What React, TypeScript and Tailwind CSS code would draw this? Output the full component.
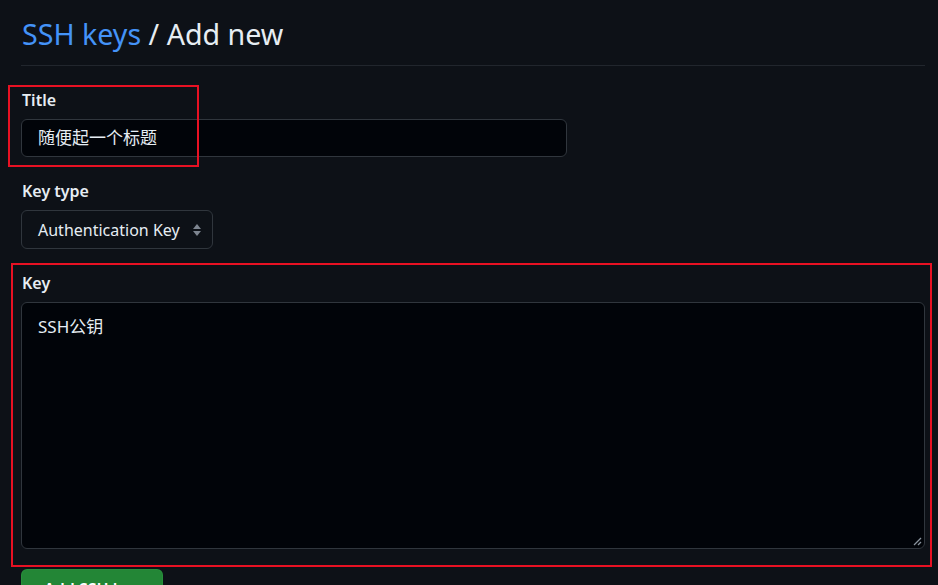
import React from "react";

const font = { fontFamily: '"Noto Sans", "Noto Sans CJK SC", sans-serif' };

export default function App() {
  return (
    <div className="relative w-[938px] h-[585px] overflow-hidden bg-[#0d1117] text-[#e6edf3]" style={font}>
      <div className="pl-[21px] pr-[13px]">
        <div className="pt-[14px] pb-[11px] border-b border-[#21262d]">
          <h1 className="text-[28.6px] leading-[40px] font-normal pl-[1px]">
            <span className="text-[#4493f8]">SSH keys</span>
            <span className="text-[#e6edf3]"> / Add new</span>
          </h1>
        </div>

        <div className="pt-[24px] flex flex-col">
          <label className="text-[16px] leading-[20px] font-semibold pl-[1px]">Title</label>
          <div className="mt-[9px] w-[546px] h-[38px] rounded-[6px] border border-[#30363d] bg-[#010409] flex items-center pl-[16px] text-[17px]">
            随便起一个标题
          </div>

          <label className="mt-[24px] text-[16px] leading-[20px] font-semibold pl-[1px]">Key type</label>
          <div className="mt-[9px] w-[192px] h-[39px] rounded-[6px] border border-[#30363d] bg-[#0d1117] flex items-center pl-[16px] pr-[10px] justify-between text-[16px]">
            <span>Authentication Key</span>
            <svg width="10" height="14" viewBox="0 0 10 14" className="text-[#7d8590]">
              <path d="M5 1 L9 6 H1 Z" fill="currentColor" />
              <path d="M5 13 L9 8 H1 Z" fill="currentColor" />
            </svg>
          </div>

          <label className="mt-[24px] text-[16px] leading-[20px] font-semibold pl-[1px]">Key</label>
          <div className="relative mt-[9px] w-[904px] h-[247px] rounded-[6px] border border-[#30363d] bg-[#010409] pl-[16px] pt-[12px] text-[17px] leading-[24px]">
            SSH公钥
            <svg width="10" height="10" viewBox="0 0 10 10" className="absolute right-[2px] bottom-[2px]">
              <path d="M2 9 L9 2" stroke="#8b949e" strokeWidth="1.3" />
              <path d="M6 9 L9 6" stroke="#8b949e" strokeWidth="1.3" />
            </svg>
          </div>

          <div className="mt-[20px]">
            <button className="w-[142px] h-[40px] rounded-[6px] bg-[#238636] text-white text-[16px] font-semibold border border-[#2ea043]/40">
              Add SSH key
            </button>
          </div>
        </div>
      </div>

      <div className="absolute left-[8px] top-[85px] w-[191px] h-[82px] border-2 border-[#e81123]" />
      <div className="absolute left-[11px] top-[263px] w-[921px] h-[304px] border-2 border-[#e81123]" />
    </div>
  );
}
